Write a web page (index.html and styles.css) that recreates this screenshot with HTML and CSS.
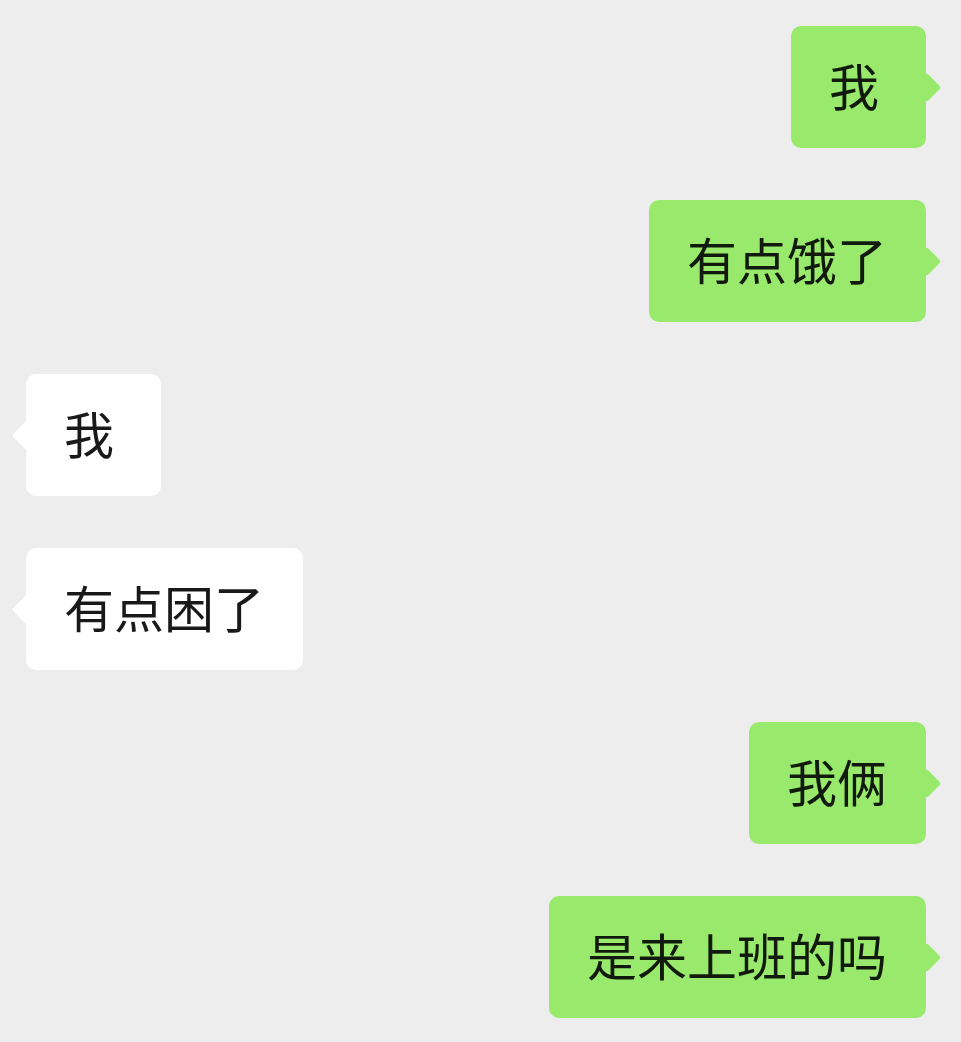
FILE: index.html
```html
<!DOCTYPE html>
<html>
<head>
  <meta charset="utf-8">
  <title>Chat</title>
  <link rel="stylesheet" href="styles.css">
</head>
<body>
  <div id="chat">
    <div class="msg mine">我</div>
    <div class="msg mine">有点饿了</div>
    <div class="msg theirs">我</div>
    <div class="msg theirs">有点困了</div>
    <div class="msg mine">我俩</div>
    <div class="msg mine">是来上班的吗</div>
  </div>
</body>
</html>
```

FILE: styles.css
```css
body {
  margin: 0;
  background-color: #ededed;
  font-family: "Noto Sans CJK SC", "Noto Sans", sans-serif;
}

#chat {
  display: flex;
  flex-direction: column;
  gap: 52px;
  padding: 26px 35px 0 26px;
}

.msg {
  position: relative;
  min-width: 58px;
  padding: 33px 39px 39px 38px;
  font-size: 50px;
  line-height: 50px;
  border-radius: 10px;
  color: #191919;
}

.msg::before {
  content: "";
  position: absolute;
  top: 50%;
  width: 21px;
  height: 21px;
  margin-top: -10.5px;
  border-radius: 3px;
  transform: rotate(45deg);
}

.mine {
  align-self: flex-end;
  background-color: #99ea6c;
  color: #111a0c;
}

.mine::before {
  right: -10.5px;
  background-color: #99ea6c;
}

.theirs {
  align-self: flex-start;
  background-color: #ffffff;
}

.theirs::before {
  left: -10.5px;
  background-color: #ffffff;
}
```
